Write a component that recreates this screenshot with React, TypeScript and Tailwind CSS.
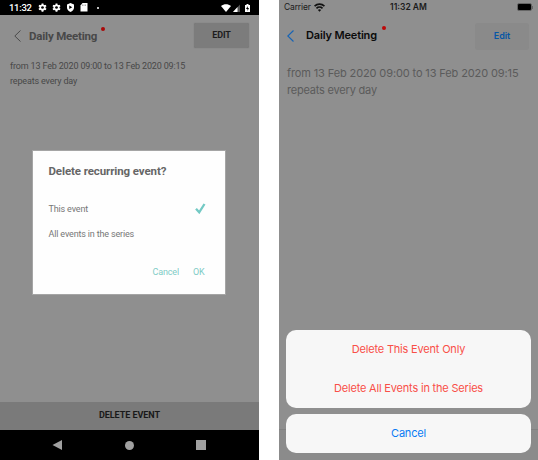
import type { ReactNode } from "react";

function Gear() {
  return (
    <svg width="9" height="9" viewBox="0 0 24 24">
      <path d="M12 1v22M2.500 6.500l19 11M21.500 6.500l-19 11" stroke="#fff" strokeWidth="5" />
      <circle cx="12" cy="12" r="6" fill="none" stroke="#fff" strokeWidth="4.500" />
      <circle cx="12" cy="12" r="3.600" fill="#000" />
    </svg>
  );
}

function Label({ className, children }: { className: string; children: ReactNode }) {
  return <span className={`block whitespace-nowrap ${className}`}>{children}</span>;
}

function AndroidPhone() {
  return (
    <section className="relative flex h-[460px] w-[259px] flex-col bg-[#8f8f8f] font-['Roboto',sans-serif]">
      <div className="flex h-[15px] items-center bg-black pl-[9px] pr-[9px] text-white">
        <Label className="w-[29px] text-[9.500px] font-medium leading-[15px] tracking-[-0.3px]">11:32</Label>
        <div className="flex items-center gap-[5px]">
          <Gear />
          <Gear />
          <svg width="9" height="9" viewBox="0 0 16 18"><path d="M8 0 15 3v6c0 4-3 7-7 9-4-2-7-5-7-9V3Z" fill="#fff" /><path d="M5.500 5 11.500 8.500 5.500 12Z" fill="#000" /></svg>
          <svg width="8" height="9" viewBox="0 0 16 18"><path d="M5 0h10v17H1V5Z" fill="#fff" /><path d="M5 3v3M8 3v3M11 3v3" stroke="#666" /></svg>
          <span className="ml-[4px] h-[2px] w-[2px] rounded-full bg-white" />
        </div>
        <div className="ml-auto flex items-center">
          <svg width="10" height="8" viewBox="0 0 20 16"><path d="M0 4C6-1 14-1 20 4L10 16Z" fill="#fff" /></svg>
          <svg className="ml-[2px]" width="7" height="8" viewBox="0 0 14 16"><path d="M14 1v15H0Z" fill="#555" /><path d="M9 6v10H0Z" fill="#fff" /></svg>
          <svg className="ml-[5px]" width="5" height="8" viewBox="0 0 10 16"><path d="M3 0h4v2h3v14H0V2h3Z" fill="#fff" /><path d="M5.500 4 2 10h3v4l3-6H5.500Z" fill="#000" /></svg>
        </div>
      </div>
      <div className="flex h-[41px] items-center pl-[14px] pr-[10px]">
        <svg width="7" height="12" viewBox="0 0 7 12" fill="none" stroke="#4b4b4b" strokeWidth="1"><path d="M6.500.5.800 6l5.700 5.500" /></svg>
        <Label className="ml-[8px] pt-[2px] text-[11.500px] font-bold tracking-[-0.2px] text-[#484848]">Daily Meeting</Label>
        <span className="mb-[14px] ml-[4px] h-1 w-1 rounded-full bg-[#a90808]" />
        <button className="ml-auto h-[25px] w-[55px] rounded-[2px] bg-[#7c7c7c] text-[9px] font-bold tracking-[-0.1px] text-[#1c1c1c] shadow-[0_0_1px_#666]">EDIT</button>
      </div>
      <div className="pl-[10px] pt-[2px] text-[9px] leading-[16px] tracking-[-0.16px] text-[#484848]">
        <Label className="">from 13 Feb 2020 09:00 to 13 Feb 2020 09:15</Label>
        <Label className="mt-[-1px]">repeats every day</Label>
      </div>
      <div className="mt-auto flex h-[28px] items-center justify-center bg-[#7a7a7a] text-[9px] font-bold tracking-[-0.05px] text-[#191919]">DELETE EVENT</div>
      <div className="flex h-[30px] items-center bg-black pl-[52px]">
        <svg width="10" height="10" viewBox="0 0 10 10"><path d="M10 0v10L.5 5Z" fill="#a0a0a0" /></svg>
        <span className="ml-[63px] h-[9px] w-[9px] rounded-full bg-[#a0a0a0]" />
        <span className="ml-[62px] h-[10px] w-[10px] bg-[#a0a0a0]" />
      </div>
      <div className="absolute left-[33px] top-[151px] flex h-[143px] w-[192px] flex-col bg-[#fefefe] pl-[15.500px] pr-[16px] pt-[12px] shadow-[0_0_0_1px_#a5a5a5]">
        <Label className="text-[11.500px] font-bold leading-[16px] tracking-[-0.1px] text-[#666]">Delete recurring event?</Label>
        <div className="mt-[22px] flex h-4 items-center justify-between pr-[3px] text-[9px] tracking-[-0.16px] text-[#777]">
          <Label className="pt-[2px]">This event</Label>
          <svg className="mb-[2px]" width="11" height="11" viewBox="0 0 11 11" fill="none" stroke="#73c9c4" strokeWidth="2.300"><path d="m1 5.800 3.200 3.500L9.500 1" /></svg>
        </div>
        <Label className="mt-[9px] text-[9px] leading-4 tracking-[-0.16px] text-[#777]">All events in the series</Label>
        <div className="mt-[22px] flex gap-[14px] pl-[104px] text-[9px] leading-4 tracking-[-0.16px] text-[#80ccc6]">
          <Label className="">Cancel</Label>
          <Label className="">OK</Label>
        </div>
      </div>
    </section>
  );
}

function ApplePhone() {
  return (
    <section className="relative flex h-[460px] w-[259px] flex-col bg-[#8f8f8f] font-['Inter',sans-serif]">
      <div className="grid h-[14px] grid-cols-3 items-center pl-[5px] pr-[5px] text-[8.500px] text-[#1a1a1a]">
        <div className="flex items-center gap-[3px]">
          <Label className="tracking-[-0.15px]">Carrier</Label>
          <svg width="11" height="9" viewBox="0 0 20 16" fill="none" stroke="#111" strokeWidth="3"><path d="M1 5.500c5-5 13-5 18 0M4.500 9.500c3-3 8-3 11 0" /><path d="m7 12.500c2-2 4-2 6 0l-3 3Z" fill="#111" stroke="none" /></svg>
        </div>
        <Label className="text-center font-semibold">11:32 AM</Label>
        <div className="ml-auto flex items-center">
          <span className="h-[8px] w-[15px] rounded-[2px] border border-[#666] bg-black" />
          <span className="h-[3px] w-px bg-[#666]" />
        </div>
      </div>
      <div className="flex h-[44px] items-center pl-[8px] pr-[9px]">
        <svg width="7" height="12" viewBox="0 0 7 12" fill="none" stroke="#1764b5" strokeWidth="1.200"><path d="M6.500.5.800 6l5.700 5.500" /></svg>
        <Label className="ml-[12px] pb-[1px] text-[11px] font-semibold tracking-[-0.15px] text-[#0b0b0b]">Daily Meeting</Label>
        <span className="mb-[16px] ml-[5px] h-1 w-1 rounded-full bg-[#bd0808]" />
        <button className="ml-auto h-[27px] w-[54px] rounded-[3px] bg-[#8a8a8a] text-[9px] font-semibold text-[#0756a5]">Edit</button>
      </div>
      <div className="pl-[8px] pt-[6px] text-[11px] leading-[18px] tracking-[-0.12px] text-[#5b5b5b]">
        <Label className="">from 13 Feb 2020 09:00 to 13 Feb 2020 09:15</Label>
        <Label className="mt-[-1px] tracking-[-0.2px]">repeats every day</Label>
      </div>
      <div className="mt-auto h-[31px] border-t border-[#828282] bg-[#8b8b8b]" />
      <div className="absolute bottom-[7px] left-[7px] flex w-[245px] flex-col gap-[6px] text-center text-[11px] tracking-[-0.19px]">
        <div className="h-[78px] rounded-[10px] bg-[#f7f7f7] leading-[39px] text-[#f94f48]">
          <Label className="">Delete This Event Only</Label>
          <Label className="">Delete All Events in the Series</Label>
        </div>
        <button className="h-[39px] rounded-[10px] bg-[#f7f7f7] tracking-[-0.19px] text-[#087bf4]">Cancel</button>
      </div>
    </section>
  );
}

export default function App() {
  return (
    <main className="flex h-[460px] w-[538px] justify-between overflow-hidden bg-white">
      <AndroidPhone />
      <ApplePhone />
    </main>
  );
}
